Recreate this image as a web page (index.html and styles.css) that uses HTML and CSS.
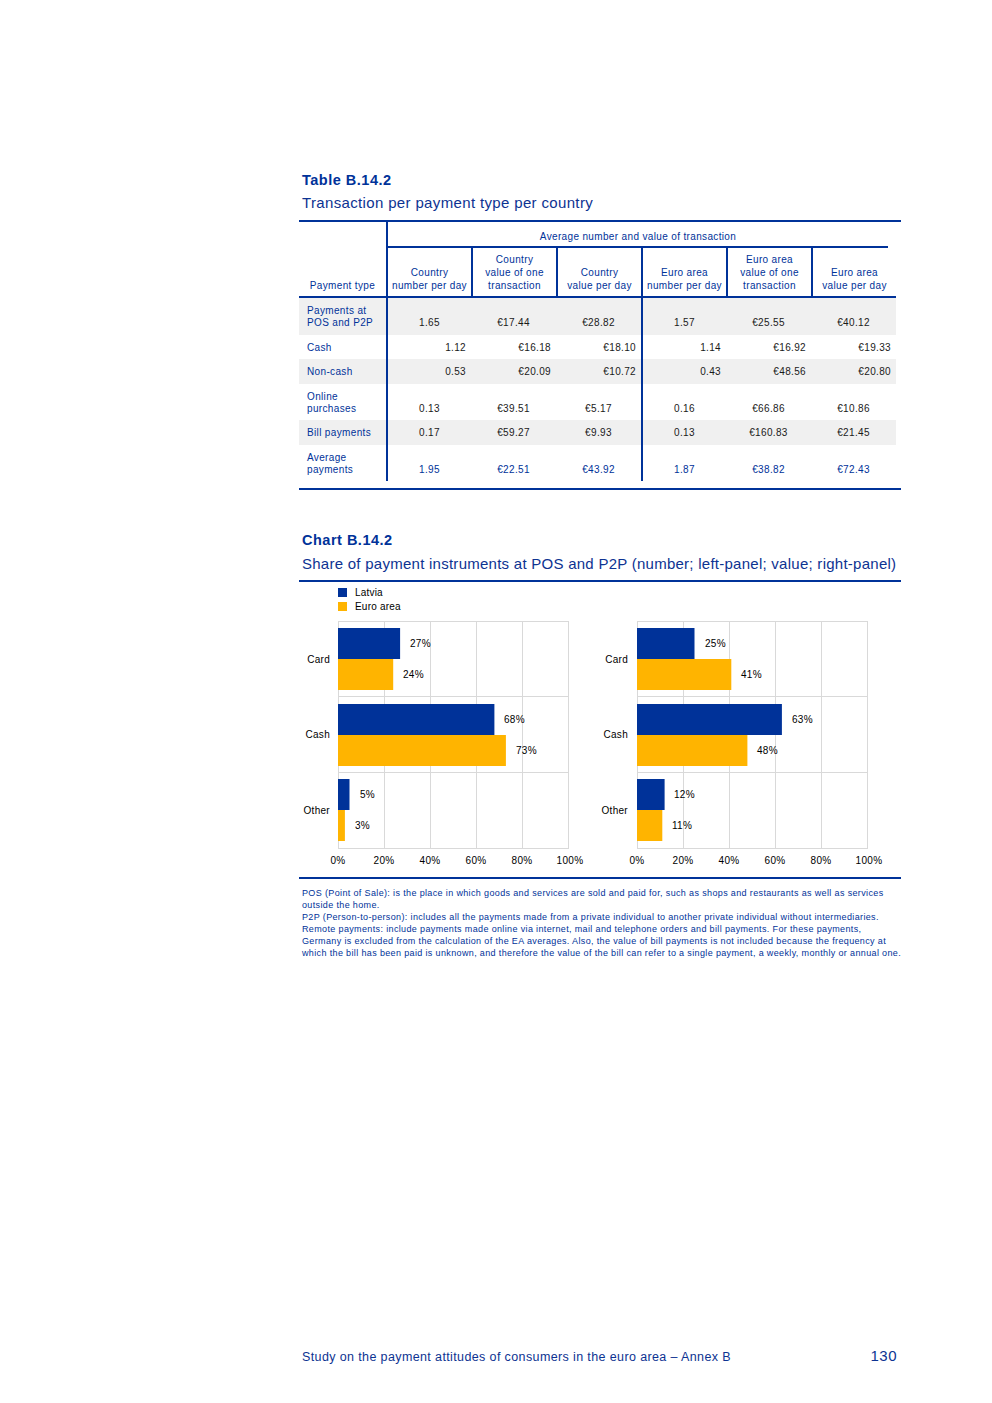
FILE: index.html
```html
<!DOCTYPE html>
<html lang="en">
<head>
<meta charset="utf-8">
<title>Table B.14.2 / Chart B.14.2</title>
<link rel="stylesheet" href="styles.css">
</head>
<body>
<div class="page">
  <section class="exhibit">
    <h2 class="ex-label">Table B.14.2</h2>
    <p class="ex-title">Transaction per payment type per country</p>
    <div class="tbl-wrap">
      <table class="data">
        <colgroup>
          <col class="c-label">
          <col class="c-first">
          <col class="c-val">
          <col class="c-val">
          <col class="c-val">
          <col class="c-val">
          <col class="c-val">
        </colgroup>
        <thead>
          <tr class="h1">
            <th rowspan="2" class="ptype">Payment type</th>
            <th colspan="6" class="group">Average number and value of transaction</th>
          </tr>
          <tr class="h2">
            <th class="first">Country<br>number per day</th>
            <th>Country<br>value of one<br>transaction</th>
            <th>Country<br>value per day</th>
            <th>Euro area<br>number per day</th>
            <th>Euro area<br>value of one<br>transaction</th>
            <th>Euro area<br>value per day</th>
          </tr>
        </thead>
        <tbody>
          <tr class="shade tall">
            <th>Payments at<br>POS and P2P</th>
            <td>1.65</td><td>€17.44</td><td>€28.82</td><td class="ea">1.57</td><td>€25.55</td><td>€40.12</td>
          </tr>
          <tr class="right">
            <th>Cash</th>
            <td>1.12</td><td>€16.18</td><td>€18.10</td><td class="ea">1.14</td><td>€16.92</td><td>€19.33</td>
          </tr>
          <tr class="shade right">
            <th>Non-cash</th>
            <td>0.53</td><td>€20.09</td><td>€10.72</td><td class="ea">0.43</td><td>€48.56</td><td>€20.80</td>
          </tr>
          <tr class="tall">
            <th>Online<br>purchases</th>
            <td>0.13</td><td>€39.51</td><td>€5.17</td><td class="ea">0.16</td><td>€66.86</td><td>€10.86</td>
          </tr>
          <tr class="shade">
            <th>Bill payments</th>
            <td>0.17</td><td>€59.27</td><td>€9.93</td><td class="ea">0.13</td><td>€160.83</td><td>€21.45</td>
          </tr>
          <tr class="tall total">
            <th>Average<br>payments</th>
            <td>1.95</td><td>€22.51</td><td>€43.92</td><td class="ea">1.87</td><td>€38.82</td><td>€72.43</td>
          </tr>
        </tbody>
      </table>
    </div>
  </section>

  <section class="exhibit chart-ex">
    <h2 class="ex-label">Chart B.14.2</h2>
    <p class="ex-title chart-title">Share of payment instruments at POS and P2P (number; left-panel; value; right-panel)</p>
    <div class="chart-body">
      <ul class="legend">
        <li><span class="swatch sw-lv"></span>Latvia</li>
        <li><span class="swatch sw-ea"></span>Euro area</li>
      </ul>
      <div class="panels">
        <svg class="panel" width="299" height="256" viewBox="0 0 299 256" aria-label="Number">
          <g class="grid">
            <line x1="39.5" y1="7" x2="39.5" y2="234"/>
            <line x1="85.5" y1="7" x2="85.5" y2="234"/>
            <line x1="131.5" y1="7" x2="131.5" y2="234"/>
            <line x1="177.5" y1="7" x2="177.5" y2="234"/>
            <line x1="223.5" y1="7" x2="223.5" y2="234"/>
            <line x1="269.5" y1="7" x2="269.5" y2="234"/>
            <line x1="39" y1="7.5" x2="270" y2="7.5"/>
            <line x1="39" y1="82.5" x2="270" y2="82.5"/>
            <line x1="39" y1="158.5" x2="270" y2="158.5"/>
            <line x1="39" y1="234.5" x2="270" y2="234.5"/>
          </g>
          <rect class="lv" x="39" y="14" width="62.1" height="31"/>
          <rect class="ea" x="39" y="45" width="55.2" height="31"/>
          <rect class="lv" x="39" y="90" width="156.4" height="31"/>
          <rect class="ea" x="39" y="121" width="167.9" height="31"/>
          <rect class="lv" x="39" y="165" width="11.5" height="31"/>
          <rect class="ea" x="39" y="196" width="6.9" height="31"/>
          <text class="val" x="111" y="33">27%</text>
          <text class="val" x="104" y="64">24%</text>
          <text class="val" x="205" y="109">68%</text>
          <text class="val" x="217" y="140">73%</text>
          <text class="val" x="61" y="184">5%</text>
          <text class="val" x="56" y="215">3%</text>
          <text class="cat" x="31" y="48.5">Card</text>
          <text class="cat" x="31" y="124">Cash</text>
          <text class="cat" x="31" y="199.5">Other</text>
          <text class="tick" x="39" y="249.5">0%</text>
          <text class="tick" x="85" y="249.5">20%</text>
          <text class="tick" x="131" y="249.5">40%</text>
          <text class="tick" x="177" y="249.5">60%</text>
          <text class="tick" x="223" y="249.5">80%</text>
          <text class="tick" x="271" y="249.5">100%</text>
        </svg>
        <svg class="panel" width="299" height="256" viewBox="0 0 299 256" aria-label="Value">
          <g class="grid">
            <line x1="39.5" y1="7" x2="39.5" y2="234"/>
            <line x1="85.5" y1="7" x2="85.5" y2="234"/>
            <line x1="131.5" y1="7" x2="131.5" y2="234"/>
            <line x1="177.5" y1="7" x2="177.5" y2="234"/>
            <line x1="223.5" y1="7" x2="223.5" y2="234"/>
            <line x1="269.5" y1="7" x2="269.5" y2="234"/>
            <line x1="39" y1="7.5" x2="270" y2="7.5"/>
            <line x1="39" y1="82.5" x2="270" y2="82.5"/>
            <line x1="39" y1="158.5" x2="270" y2="158.5"/>
            <line x1="39" y1="234.5" x2="270" y2="234.5"/>
          </g>
          <rect class="lv" x="39" y="14" width="57.5" height="31"/>
          <rect class="ea" x="39" y="45" width="94.3" height="31"/>
          <rect class="lv" x="39" y="90" width="144.9" height="31"/>
          <rect class="ea" x="39" y="121" width="110.4" height="31"/>
          <rect class="lv" x="39" y="165" width="27.6" height="31"/>
          <rect class="ea" x="39" y="196" width="25.3" height="31"/>
          <text class="val" x="107" y="33">25%</text>
          <text class="val" x="143" y="64">41%</text>
          <text class="val" x="194" y="109">63%</text>
          <text class="val" x="159" y="140">48%</text>
          <text class="val" x="76" y="184">12%</text>
          <text class="val" x="74" y="215">11%</text>
          <text class="cat" x="30" y="48.5">Card</text>
          <text class="cat" x="30" y="124">Cash</text>
          <text class="cat" x="30" y="199.5">Other</text>
          <text class="tick" x="39" y="249.5">0%</text>
          <text class="tick" x="85" y="249.5">20%</text>
          <text class="tick" x="131" y="249.5">40%</text>
          <text class="tick" x="177" y="249.5">60%</text>
          <text class="tick" x="223" y="249.5">80%</text>
          <text class="tick" x="271" y="249.5">100%</text>
        </svg>
      </div>
    </div>
    <div class="notes">
      <p>POS (Point of Sale): is the place in which goods and services are sold and paid for, such as shops and restaurants as well as services<br>outside the home.</p>
      <p>P2P (Person-to-person): includes all the payments made from a private individual to another private individual without intermediaries.</p>
      <p>Remote payments: include payments made online via internet, mail and telephone orders and bill payments. For these payments,<br>Germany is excluded from the calculation of the EA averages. Also, the value of bill payments is not included because the frequency at<br>which the bill has been paid is unknown, and therefore the value of the bill can refer to a single payment, a weekly, monthly or annual one.</p>
    </div>
  </section>

  <footer class="foot">
    <span class="foot-title">Study on the payment attitudes of consumers in the euro area – Annex B</span>
    <span class="foot-page">130</span>
  </footer>
</div>
</body>
</html>
```

FILE: styles.css
```css
* { box-sizing: border-box; }

body {
  margin: 0;
  background: #fff;
  font-family: "Liberation Sans", Arial, sans-serif;
  color: #003299;
}

.page {
  width: 602px;
  margin-left: 299px;
  min-height: 1403px;
  padding: 171px 0 37px;
  display: flex;
  flex-direction: column;
}

.ex-label {
  margin: 0;
  padding-left: 3px;
  font-size: 14.5px;
  line-height: 18px;
  font-weight: bold;
  letter-spacing: 0.5px;
  color: #003299;
}

.ex-title {
  margin: 4px 0 7px;
  padding-left: 3px;
  font-size: 15px;
  line-height: 20px;
  letter-spacing: 0.35px;
  color: #0d3392;
  white-space: nowrap;
}

.chart-title {
  margin: 5px 0 6px;
  letter-spacing: 0.26px;
}

/* ---------- table ---------- */
.tbl-wrap {
  border-top: 2px solid #003299;
  border-bottom: 2px solid #003299;
  padding-bottom: 7px;
}

.data {
  border-collapse: separate;
  border-spacing: 0;
  table-layout: fixed;
  width: 597px;
  font-size: 10px;
  letter-spacing: 0.35px;
}

.c-label { width: 89px; }
.c-first { width: 83px; }
.c-val { width: 85px; }

.data th,
.data td {
  padding: 0;
  font-weight: normal;
}

.data thead th {
  color: #003299;
  text-align: center;
  line-height: 13px;
  vertical-align: bottom;
}

.data .ptype {
  border-right: 2px solid #003299;
  border-bottom: 2px solid #003299;
  padding-bottom: 4.5px;
}

.data .group {
  padding: 7.5px 8px 5.5px 0;
  background: linear-gradient(#003299, #003299) no-repeat left bottom / calc(100% - 8px) 2px;
}

.data .h2 th {
  padding: 4.5px 0;
  border-left: 2px solid #003299;
  border-bottom: 2px solid #003299;
}

.data .h2 th.first {
  border-left: 0;
}

.data tbody th {
  text-align: left;
  color: #003299;
  padding: 7px 4px 5.5px 8px;
  line-height: 12px;
  vertical-align: middle;
  white-space: nowrap;
  border-right: 2px solid #003299;
}

.data tbody td {
  text-align: center;
  color: #1a1a1a;
  padding: 7px 5px 5.5px;
  line-height: 12px;
  vertical-align: middle;
}

.data tbody td.ea {
  border-left: 2px solid #003299;
}

.data tr.tall td {
  vertical-align: bottom;
}

.data tr.right td {
  text-align: right;
}

.data tr.shade th,
.data tr.shade td {
  background: #f0f0f0;
}

.data tr.total td {
  color: #003299;
}

/* ---------- chart ---------- */
.chart-ex {
  margin-top: 41px;
}

.chart-body {
  border-top: 2px solid #003299;
}

.legend {
  list-style: none;
  margin: 3px 0 1px 39px;
  padding: 0;
  font-size: 10px;
  letter-spacing: 0.2px;
  color: #000;
}

.legend li {
  display: flex;
  align-items: center;
  height: 14px;
}

.swatch {
  width: 9px;
  height: 9px;
  margin-right: 8px;
}

.sw-lv { background: #003299; }
.sw-ea { background: #ffb400; }

.panels {
  display: flex;
}

.panel {
  display: block;
}

.panel .grid line {
  stroke: #d9d9d9;
  stroke-width: 1;
}

.panel .lv { fill: #003299; }
.panel .ea { fill: #ffb400; }

.panel text {
  font-family: "Liberation Sans", Arial, sans-serif;
  font-size: 10px;
  letter-spacing: 0.3px;
  fill: #000;
}

.panel .cat { text-anchor: end; }
.panel .tick { text-anchor: middle; }

/* ---------- notes ---------- */
.notes {
  margin-top: 7px;
  border-top: 2px solid #003299;
  padding: 8px 0 0 3px;
  font-size: 9px;
  line-height: 12px;
  letter-spacing: 0.36px;
  color: #003299;
  white-space: nowrap;
}

.notes p {
  margin: 0;
}

/* ---------- footer ---------- */
.foot {
  margin-top: auto;
  display: flex;
  justify-content: space-between;
  align-items: baseline;
  padding: 0 4px 0 3px;
  line-height: 18px;
  color: #0d3392;
}

.foot-title {
  font-size: 12.5px;
  letter-spacing: 0.38px;
}

.foot-page {
  font-size: 15px;
  letter-spacing: 0.5px;
}
```
